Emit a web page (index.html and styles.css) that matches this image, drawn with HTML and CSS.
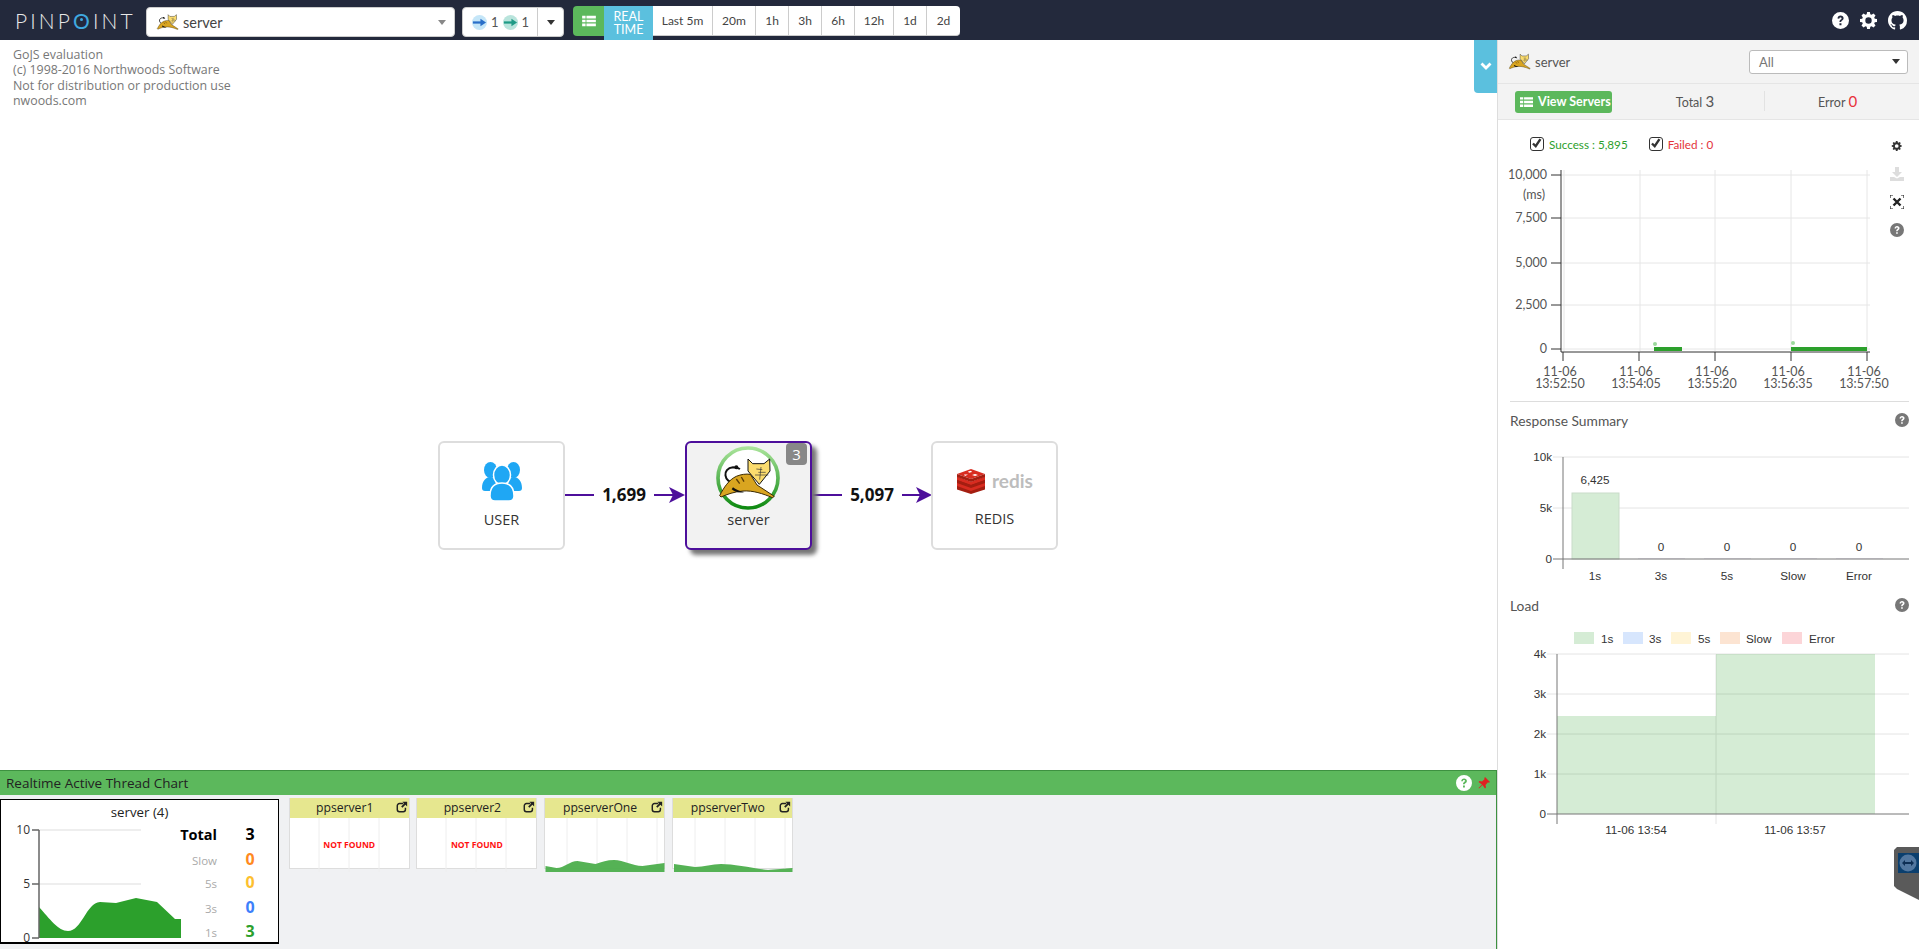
FILE: index.html
```html
<!DOCTYPE html>
<html lang="en">
<head>
<meta charset="utf-8">
<title>Pinpoint</title>
<link rel="stylesheet" href="styles.css">
</head>
<body>
<svg class="sprite" aria-hidden="true">
  <defs>
    <g id="cat">
      <path d="M165 152C132 150 126 108 160 105c8 0 14 1 21 5" fill="none" stroke="#111" stroke-width="6"/>
      <circle cx="170" cy="105" r="6" fill="#111"/>
      <path d="M120 190c12-24 28-48 50-58 14-6 30-8 42-6l20 32 52 34-6 4c-28-12-58-22-88-20-26 2-48 10-66 18z" fill="#d9a520" stroke="#3a2a05" stroke-width="3"/>
      <path d="M160 165c8 6 18 12 34 14-14 4-30 0-38-8z" fill="#111"/>
      <path d="M205 80l14 14h34l17-14 1 36-32 40-34-40z" fill="#fbdc6e" stroke="#111" stroke-width="3"/>
      <path d="M230 110l18 2M236 120h22M226 128h40M244 104l-4 38" fill="none" stroke="#333" stroke-width="2"/>
      <path d="M170 140l10 14M185 134l8 14" stroke="#5a3c05" stroke-width="4"/>
    </g>
    <g id="q">
      <path fill-rule="evenodd" d="M8 0a8 8 0 1 0 0 16A8 8 0 0 0 8 0zM5.200 6.200c0-1.700 1.300-2.800 2.900-2.800s2.800 1.100 2.800 2.500c0 2.100-2.200 2-2.200 3.400H7c0-2.400 2-2.300 2-3.300 0-.5-.4-.9-1-.9-.7 0-1.100.5-1.100 1.200zM7 10.500h1.900v1.900H7z"/>
    </g>
    <g id="cog">
      <path d="M6.600 0h2.800l.4 2.200 1.300.6 1.900-1.300 2 2-1.300 1.900.6 1.300 2.200.4v2.800l-2.200.4-.6 1.300 1.300 1.900-2 2-1.900-1.300-1.300.6-.4 2.200H6.600l-.4-2.200-1.300-.6L3 15.500l-2-2 1.300-1.900-.6-1.300L-.5 9.900V7.100l2.200-.4.6-1.300L1 3.500l2-2 1.900 1.300 1.300-.6zM8 5.300a3.200 3.200 0 1 0 0 6.400 3.200 3.200 0 0 0 0-6.400z" fill-rule="evenodd"/>
    </g>
    <g id="thlist">
      <path d="M0 1h4v3H0zM5 1h11v3H5zM0 5.500h4v3H0zM5 5.500h11v3H5zM0 10h4v3H0zM5 10h11v3H5z"/>
    </g>
    <g id="ext">
      <path d="M8.500 3H4a2.500 2.500 0 0 0-2.500 2.500V10A2.500 2.500 0 0 0 4 12.500h4.500A2.500 2.500 0 0 0 11 10V8" fill="none" stroke="#222" stroke-width="1.700"/>
      <path d="M7.500 1H13v5.500l-2-2L7.500 8 6 6.500 9.500 3z" fill="#222"/>
    </g>
  </defs>
</svg>

<div class="app">
  <header class="topbar">
    <div class="logo">PINP<span class="logo-o">O</span>INT</div>
    <div class="appsel">
      <svg class="cat-sm" viewBox="110 75 180 125"><use href="#cat"/></svg>
      <span class="appsel-name">server</span>
      <span class="caret caret-grey"></span>
    </div>
    <div class="depth">
      <div class="depth-main">
        <svg class="depth-ico" viewBox="0 0 16 16"><circle cx="8" cy="8" r="8" fill="#c5e6f8"/><path d="M1 8h9" stroke="#2a6fc9" stroke-width="2.400"/><path d="M9 4l6 4-6 4z" fill="#2a6fc9"/></svg>
        <span>1</span>
        <svg class="depth-ico" viewBox="0 0 16 16"><circle cx="8" cy="8" r="8" fill="#b9e4dc"/><path d="M1 8h9" stroke="#1f9a86" stroke-width="2.400"/><path d="M9 4l6 4-6 4z" fill="#1f9a86"/></svg>
        <span>1</span>
      </div>
      <div class="depth-drop"><span class="caret caret-dark"></span></div>
    </div>
    <div class="period">
      <div class="period-list"><svg class="ico-thlist" viewBox="0 0 16 14"><use href="#thlist"/></svg></div>
      <div class="period-real">REAL<br>TIME</div>
      <div class="period-btns">
        <span class="pb pb-5m">Last 5m</span><span class="pb pb-20">20m</span><span class="pb pb-s">1h</span><span class="pb pb-s">3h</span><span class="pb pb-s">6h</span><span class="pb pb-12">12h</span><span class="pb pb-s">1d</span><span class="pb pb-s">2d</span>
      </div>
    </div>
    <div class="top-icons">
      <svg class="ti" viewBox="0 0 16 16"><use href="#q"/></svg>
      <svg class="ti" viewBox="-0.500 0 17 17"><use href="#cog"/></svg>
      <svg class="ti ti-gh" viewBox="0 0 16 16"><path d="M8 0C3.580 0 0 3.580 0 8c0 3.540 2.290 6.530 5.470 7.590.4.070.55-.17.55-.38 0-.19-.01-.82-.01-1.490-2.010.37-2.530-.49-2.690-.94-.09-.23-.48-.94-.82-1.130-.28-.15-.68-.52-.01-.53.63-.01 1.080.58 1.230.82.72 1.210 1.870.87 2.330.66.07-.52.28-.87.51-1.070-1.780-.2-3.640-.89-3.640-3.950 0-.87.31-1.590.82-2.150-.08-.2-.36-1.020.08-2.120 0 0 .67-.21 2.200.82.64-.18 1.320-.27 2-.27.68 0 1.360.09 2 .27 1.530-1.040 2.200-.82 2.200-.82.44 1.100.16 1.920.08 2.120.51.56.82 1.270.82 2.150 0 3.070-1.870 3.750-3.650 3.950.29.25.54.73.54 1.480 0 1.070-.01 1.930-.01 2.200 0 .21.15.46.55.38A8.013 8.013 0 0016 8c0-4.420-3.580-8-8-8z"/></svg>
    </div>
  </header>

  <div class="main">
    <div class="left">
      <div class="canvas">
        <div class="watermark">GoJS evaluation<br>(c) 1998-2016 Northwoods Software<br>Not for distribution or production use<br>nwoods.com</div>

        <svg class="edges" viewBox="0 0 1497 730">
          <g class="edge">
            <path d="M564 455h30M654 455h24"/>
            <path class="arrow" d="M669 447l16 8-16 8 4-8z"/>
            <path d="M811 455h31M902 455h23"/>
            <path class="arrow" d="M916 447l16 8-16 8 4-8z"/>
          </g>
        </svg>
        <div class="elabel elabel-a">1,699</div>
        <div class="elabel elabel-b">5,097</div>

        <div class="node node-user">
          <svg class="n-users" viewBox="0 0 40 40">
            <g fill="#1fa7f4">
              <ellipse cx="8.500" cy="9" rx="6.500" ry="8"/><ellipse cx="31.500" cy="9" rx="6.500" ry="8"/>
              <path d="M0 27c0-7 4-11 8-11s6 3 6 8v6H3c-2 0-3-1-3-3zM40 27c0-7-4-11-8-11s-6 3-6 8v6h11c2 0 3-1 3-3z"/>
            </g>
            <ellipse cx="20" cy="14" rx="8.500" ry="10" fill="#1fa7f4" stroke="#fff" stroke-width="1.500"/>
            <path d="M8 35c0-9 5-13 12-13s12 4 12 13c0 3-2 5-5 5H13c-3 0-5-2-5-5z" fill="#1fa7f4" stroke="#fff" stroke-width="1.500"/>
          </svg>
          <div class="n-label">USER</div>
        </div>

        <div class="node node-server">
          <span class="badge">3</span>
          <svg class="n-cat" viewBox="105 38 200 198">
            <defs><linearGradient id="ring" x1="0" y1="0" x2="0" y2="1"><stop offset="0" stop-color="#a9e39a"/><stop offset="1" stop-color="#0f8a12"/></linearGradient></defs>
            <circle cx="205" cy="137" r="90" fill="#fff" stroke="url(#ring)" stroke-width="11"/>
            <use href="#cat"/>
          </svg>
          <div class="n-label n-label-server">server</div>
        </div>

        <div class="node node-redis">
          <div class="redis-logo">
            <svg class="redis-ico" viewBox="0 0 30 26">
              <path d="M15 14L1 8.500v13L15 26l14-4.500v-13z" fill="#a41e11"/>
              <path d="M15 1L1 6l14 5 14-5z" fill="#d82c20"/>
              <path d="M15 11L1 6v3l14 5 14-5V6z" fill="#a41e11"/>
              <path d="M15 14L1 9v3l14 5 14-5V9z" fill="#d82c20"/>
              <path d="M15 17L1 12v3l14 5 14-5v-3z" fill="#a41e11"/>
              <path d="M15 20L1 15v3l14 5 14-5v-3z" fill="#d82c20"/>
              <path d="M12 3.500l3-.7 1 1.200-3 .7zM19 6l3 1-3 1-3-1zM8 6.500h4l-3 1.500z" fill="#fff"/>
            </svg>
            <span class="redis-txt">redis</span>
          </div>
          <div class="n-label">REDIS</div>
        </div>

        <div class="collapse-tab"><svg class="chev" viewBox="0 0 12 9"><path d="M1.500 1.500L6 6l4.500-4.500" fill="none" stroke="#fff" stroke-width="2.800"/></svg></div>
      </div>

      <section class="rt">
        <div class="rt-head">
          <span>Realtime Active Thread Chart</span>
          <span class="rt-tools">
            <svg class="rt-q" viewBox="0 0 16 16"><use href="#q"/></svg>
            <svg class="rt-pin" viewBox="0 0 12 12"><path d="M7 0l5 5-1.200.8-.8-.5L7.500 8 8 10.500 7 11.500 4.500 8 1 11.500l-.5-.5L4 7.500.5 5l1-1L4 4.500l2.700-2.500-.5-.8z" fill="#e02020"/></svg>
          </span>
        </div>
        <div class="rt-body">
          <div class="tcard">
            <div class="tcard-title">server (4)</div>
            <svg class="tcard-chart" viewBox="0 0 279 125">
              <g class="t-grid"><path d="M39 11h102M39 65h102"/></g>
              <path d="M39 88C50 100 58 112 68 112 82 112 86 84 100 83L116 84 136 79 157 83 175 100 181 100V119H39z" fill="#2ca02c"/>
              <path class="t-axis" d="M39 11v108M32 11h7M32 65h7M32 119h7"/>
              <text class="t-y" x="30" y="15">10</text><text class="t-y" x="30" y="69">5</text><text class="t-y" x="30" y="123">0</text>
              <text class="t-total" x="217" y="21">Total</text><text class="t-n t-black" x="250" y="21">3</text>
              <text class="t-l" x="217" y="46">Slow</text><text class="t-n t-or" x="250" y="46">0</text>
              <text class="t-l" x="217" y="69">5s</text><text class="t-n t-ye" x="250" y="69">0</text>
              <text class="t-l" x="217" y="94">3s</text><text class="t-n t-bl" x="250" y="94">0</text>
              <text class="t-l" x="217" y="118">1s</text><text class="t-n t-gr" x="250" y="118">3</text>
            </svg>
          </div>
          <div class="scard">
            <div class="scard-h">ppserver1<svg class="ext" viewBox="0 0 14 14"><use href="#ext"/></svg></div>
            <div class="scard-b"><svg class="s-chart" viewBox="0 0 121 54"><path class="s-grid" d="M30 0v54M60 0v54M90 0v54"/></svg><span class="nf">NOT FOUND</span></div>
          </div>
          <div class="scard">
            <div class="scard-h">ppserver2<svg class="ext" viewBox="0 0 14 14"><use href="#ext"/></svg></div>
            <div class="scard-b"><svg class="s-chart" viewBox="0 0 121 54"><path class="s-grid" d="M30 0v54M60 0v54M90 0v54"/></svg><span class="nf">NOT FOUND</span></div>
          </div>
          <div class="scard">
            <div class="scard-h">ppserverOne<svg class="ext" viewBox="0 0 14 14"><use href="#ext"/></svg></div>
            <div class="scard-b"><svg class="s-chart" viewBox="0 0 121 54"><path class="s-grid" d="M23 0v54M53 0v54M83 0v54M113 0v54"/><path class="s-area" d="M1.500 48L12.500 50C20 50 26 43 33.500 43L51.500 46C58 44 63 42 70 42C80 42 88 48 98.500 48L120.500 45V54H1.500z"/></svg></div>
          </div>
          <div class="scard">
            <div class="scard-h">ppserverTwo<svg class="ext" viewBox="0 0 14 14"><use href="#ext"/></svg></div>
            <div class="scard-b"><svg class="s-chart" viewBox="0 0 121 54"><path class="s-grid" d="M23 0v54M53 0v54M83 0v54M113 0v54"/><path class="s-area" d="M2 46L23 49C32 49 40 46 49 46C62 46 80 50 96 52L120.500 50V54H2z"/></svg></div>
          </div>
        </div>
      </section>
    </div>

    <aside class="panel">
      <div class="p-head">
        <svg class="cat-sm cat-panel" viewBox="110 75 180 125"><use href="#cat"/></svg>
        <span class="p-name">server</span>
        <div class="p-select">All<span class="caret caret-dark caret-sm"></span></div>
      </div>
      <div class="p-stats">
        <div class="vs-btn"><svg class="vs-ico" viewBox="0 0 16 14"><use href="#thlist"/></svg>View Servers</div>
        <div class="stat">Total <b class="stat-n">3</b></div>
        <div class="stat stat-err">Error <b class="stat-n stat-red">0</b></div>
      </div>

      <section class="sec sec-scatter">
        <div class="checks">
          <span class="cb"><svg viewBox="0 0 14 14"><path d="M2.500 7l3.500 3.500 6-9" fill="none" stroke="#333" stroke-width="3"/></svg></span>
          <span class="ck-s">Success : 5,895</span>
          <span class="cb cb-2"><svg viewBox="0 0 14 14"><path d="M2.500 7l3.500 3.500 6-9" fill="none" stroke="#333" stroke-width="3"/></svg></span>
          <span class="ck-f">Failed : 0</span>
        </div>
        <div class="tools">
          <svg class="tool" viewBox="-3.500 -3.500 24 24"><use href="#cog"/></svg>
          <svg class="tool tool-off" viewBox="0 0 14 14"><path d="M5 0h4v5h3L7 10 2 5h3zM0 10h4l3 1.500 3-1.500h4v4H0z"/></svg>
          <svg class="tool" viewBox="0 0 14 14"><path d="M0 3V0h3M11 0h3v3M14 11v3h-3M3 14H0v-3" fill="none" stroke="#222" stroke-width="1.200"/><path d="M3.500 3.500l7 7M10.500 3.500l-7 7" stroke="#222" stroke-width="2.400"/></svg>
          <svg class="tool tool-q" viewBox="0 0 16 16"><use href="#q"/></svg>
        </div>
        <svg class="ch ch-scatter" viewBox="0 0 399 246">
          <path class="g" d="M51 21h309M51 64h309M51 109h309M51 151h309M51 195h309M54 16v181M130 16v181M205 16v181M281 16v181M357 16v181"/>
          <path class="ax" d="M51 16v182h309M41 21h10M41 64h10M41 109h10M41 151h10M41 195h10M53 198v9M129 198v9M205 198v9M281 198v9M357 198v9"/>
          <g class="yl"><text x="37" y="25">10,000</text><text x="37" y="68">7,500</text><text x="37" y="113">5,000</text><text x="37" y="155">2,500</text><text x="37" y="199">0</text></g>
          <text class="sl sl-m" x="24" y="45">(ms)</text>
          <g class="sl">
            <text x="50" y="222">11-06</text><text x="50" y="234">13:52:50</text>
            <text x="126" y="222">11-06</text><text x="126" y="234">13:54:05</text>
            <text x="202" y="222">11-06</text><text x="202" y="234">13:55:20</text>
            <text x="278" y="222">11-06</text><text x="278" y="234">13:56:35</text>
            <text x="354" y="222">11-06</text><text x="354" y="234">13:57:50</text>
          </g>
          <circle class="dot" cx="145" cy="190" r="2"/><circle class="dot" cx="283" cy="189" r="2"/>
          <path class="pts" d="M144 193h28v4h-28zM281 193h76v4h-76z"/>
        </svg>
      </section>

      <section class="sec">
        <div class="sec-title sec-title-a">Response Summary<svg class="help" viewBox="0 0 16 16"><use href="#q"/></svg></div>
        <svg class="ch ch-bar" viewBox="0 0 399 152">
          <path class="g2" d="M43 19h356M43 70h356"/>
          <rect class="bar" x="62" y="55" width="47" height="66"/>
          <path class="zero" d="M128 120.500h47"/><path class="zero" d="M194 120.500h47"/><path class="zero" d="M260 120.500h47"/><path class="zero" d="M326 120.500h47"/>
          <path class="ax2" d="M43 121h356M53 19v112"/>
          <g class="al al-e"><text x="42" y="23">10k</text><text x="42" y="74">5k</text><text x="42" y="125">0</text></g>
          <g class="al al-m">
            <text x="85" y="46">6,425</text><text x="151" y="113">0</text><text x="217" y="113">0</text><text x="283" y="113">0</text><text x="349" y="113">0</text>
            <text x="85" y="142">1s</text><text x="151" y="142">3s</text><text x="217" y="142">5s</text><text x="283" y="142">Slow</text><text x="349" y="142">Error</text>
          </g>
        </svg>
      </section>

      <section class="sec">
        <div class="sec-title sec-title-b">Load<svg class="help" viewBox="0 0 16 16"><use href="#q"/></svg></div>
        <svg class="ch ch-load" viewBox="0 0 399 225">
          <rect class="sw1" x="64" y="12" width="20" height="12"/><rect class="sw2" x="113" y="12" width="20" height="12"/><rect class="sw3" x="161" y="12" width="20" height="12"/><rect class="sw4" x="210" y="12" width="20" height="12"/><rect class="sw5" x="272" y="12" width="20" height="12"/>
          <g class="al"><text x="91" y="23">1s</text><text x="139" y="23">3s</text><text x="188" y="23">5s</text><text x="236" y="23">Slow</text><text x="299" y="23">Error</text></g>
          <path class="g2" d="M37 34h362M37 74h362M37 114h362M37 154h362M206 34v170"/>
          <path class="sw1 sw-a" d="M47 96h159V34h159v160H47z"/>
          <path class="ax2" d="M37 194h362M47 34v170"/>
          <g class="al al-e"><text x="36" y="38">4k</text><text x="36" y="78">3k</text><text x="36" y="118">2k</text><text x="36" y="158">1k</text><text x="36" y="198">0</text></g>
          <g class="al al-m"><text x="126" y="214">11-06 13:54</text><text x="285" y="214">11-06 13:57</text></g>
        </svg>
      </section>

      <svg class="tv" viewBox="0 0 25 53">
        <path d="M3 0h22v53L3 42l-3-3V3z" fill="#5a5a5a"/>
        <rect x="4" y="6" width="21" height="20" fill="#0b3f6e"/>
        <circle cx="14" cy="16" r="8.500" fill="#5277a0"/>
        <path d="M8 16l3-3v2h6v-2l3 3-3 3v-2h-6v2z" fill="#0e2f55"/>
      </svg>
    </aside>
  </div>
</div>
</body>
</html>
```
FILE: styles.css
```css
* { box-sizing: border-box; }
html, body { margin: 0; height: 100%; overflow: hidden; }
body { font-family: Lato, "Noto Sans", sans-serif; color: #333; background: #fff; }
.sprite { position: absolute; width: 0; height: 0; }

.app { display: flex; flex-direction: column; height: 949px; }

/* top bar */
.topbar { display: flex; align-items: flex-start; height: 40px; flex: none; background: #23293c; }
.logo { margin: 10px 15px 0 15px; width: 116px; font-size: 21px; line-height: 22px; font-weight: 300; letter-spacing: 3.100px; color: #e8e8e8; white-space: nowrap; }
.logo-o { position: relative; color: #3fa9e0; font-weight: 400; }
.logo-o::after { content: ""; position: absolute; left: 7px; top: 10px; width: 3px; height: 3px; border-radius: 50%; background: #3fa9e0; }
.appsel { display: flex; align-items: center; width: 309px; height: 30px; margin-top: 7px; padding-left: 9px; background: #fff; border-radius: 4px; border: 1px solid #ccc; }
.cat-sm { width: 23px; height: 20px; }
.appsel-name { margin-left: 4px; font-size: 14.500px; color: #444; }
.caret { display: inline-block; width: 0; height: 0; border-left: 4px solid transparent; border-right: 4px solid transparent; }
.caret-grey { margin-left: auto; margin-right: 8px; border-top: 5px solid #888; }
.caret-dark { border-top: 5px solid #333; }
.caret-sm { margin-left: auto; margin-right: 7px; }
.depth { display: flex; width: 102px; height: 30px; margin: 7px 0 0 7px; background: #fff; border-radius: 4px; border: 1px solid #ccc; }
.depth-main { display: flex; align-items: center; gap: 4px; width: 75px; padding-left: 9px; font-size: 13px; color: #555; border-right: 1px solid #ccc; }
.depth-ico { width: 15px; height: 15px; }
.depth-drop { display: flex; flex: 1; align-items: center; justify-content: center; }
.period { display: flex; align-items: flex-start; margin-left: 9px; }
.period-list { display: flex; align-items: center; justify-content: center; width: 31px; height: 30px; margin-top: 6px; background: #5cb85c; border-radius: 4px 0 0 4px; }
.ico-thlist { width: 14px; height: 12px; fill: #fff; }
.period-real { width: 49px; height: 34px; margin-top: 6px; padding-top: 4px; background: #5bc0de; color: #fff; font-size: 12.500px; line-height: 13px; text-align: center; }
.period-btns { display: flex; height: 30px; margin-top: 6px; background: #fff; border-radius: 0 4px 4px 0; border-bottom: 1px solid #ccc; }
.pb { display: flex; align-items: center; justify-content: center; font-size: 12px; color: #444; border-right: 1px solid #ccc; }
.pb:last-child { border-right: 0; }
.pb-5m { width: 60px; }
.pb-20 { width: 43px; }
.pb-s { width: 33px; }
.pb-12 { width: 39px; }
.top-icons { display: flex; align-items: center; gap: 11px; margin: 11px 12px 0 auto; }
.ti { width: 17px; height: 17px; fill: #fff; }
.ti-gh { width: 19px; height: 19px; }

/* main layout */
.main { display: flex; flex: 1; min-height: 0; }
.left { display: flex; flex-direction: column; width: 1497px; flex: none; }
.canvas { position: relative; flex: 1; }
.watermark { padding: 7px 0 0 13px; font: 12.400px/15.300px "Open Sans", sans-serif; color: #777; }
.edges { position: absolute; left: 0; top: 0; width: 1497px; height: 730px; }
.edge path { fill: none; stroke: #4d0f9b; stroke-width: 2; }
.edge .arrow { fill: #4d0f9b; stroke: none; }
.elabel { position: absolute; top: 443px; width: 60px; font: 700 17px/24px "Open Sans", sans-serif; color: #111; text-align: center; }
.elabel-a { left: 594px; }
.elabel-b { left: 842px; }
.node { position: absolute; top: 401px; width: 127px; height: 109px; border: 2px solid #ddd; border-radius: 6px; background: #fff; display: flex; flex-direction: column; align-items: center; }
.node-user { left: 438px; }
.node-server { left: 685px; width: 127px; border-color: #4d0f9b; background: #f2f2f2; box-shadow: 5px 5px 4px #777; }
.node-redis { left: 931px; }
.n-label { margin-top: 9px; font: 14.500px/20px "Open Sans", sans-serif; color: #333; }
.n-label-server { margin-top: -1px; }
.n-users { width: 40px; height: 40px; margin-top: 18px; }
.n-cat { width: 68px; height: 66px; margin-top: 2px; margin-left: -2px; }
.badge { position: absolute; right: 3px; top: 0; width: 21px; height: 22px; border-radius: 4px; background: #888; color: #fff; font: 15px/22px "Open Sans", sans-serif; text-align: center; }
.redis-logo { display: flex; align-items: center; gap: 6px; margin-top: 24px; height: 27px; }
.redis-ico { width: 30px; height: 26px; }
.redis-txt { font: 700 19px/26px Lato, sans-serif; color: #bdbdbd; }
.node-redis .n-label { margin-top: 15px; }
.collapse-tab { position: absolute; right: 0; top: 0; display: flex; align-items: center; justify-content: center; width: 23px; height: 53px; background: #5bc0de; border-radius: 0 0 0 4px; }
.chev { width: 12px; height: 9px; }

/* realtime */
.rt { height: 179px; flex: none; display: flex; flex-direction: column; background: #f0f1f3; border-right: 1px solid #3d9140; }
.rt-head { display: flex; align-items: center; justify-content: space-between; height: 25px; padding: 0 6px; background: #5cb85c; border-top: 1px solid #3d9140; font: 13.500px "Open Sans", sans-serif; color: #222; }
.rt-tools { display: flex; align-items: center; gap: 6px; }
.rt-q { width: 16px; height: 16px; fill: #fff; }
.rt-pin { width: 12px; height: 12px; }
.rt-body { display: flex; align-items: flex-start; gap: 6.700px; padding-top: 3px; flex: 1; }
.tcard { width: 279px; height: 145px; margin-top: 1px; margin-right: 3px; background: #fff; border: 1px solid #000; border-width: 1px 1px 2px 1px; font-family: "Open Sans", sans-serif; }
.tcard-title { height: 19px; font-size: 13.300px; line-height: 24px; text-align: center; color: #222; }
.tcard-chart { display: block; width: 279px; height: 125px; margin-left: -1px; overflow: visible; }
.t-grid path { stroke: #eee; stroke-width: 2; fill: none; }
.t-axis { fill: none; stroke: #666; stroke-width: 1.500; }
.t-y { font-size: 12px; text-anchor: end; fill: #333; }
.t-total { font-size: 14.500px; font-weight: 700; text-anchor: end; fill: #000; }
.t-l { font-size: 11.500px; text-anchor: end; fill: #aaa; }
.t-n { font-size: 16px; font-weight: 700; text-anchor: middle; }
.t-black { fill: #000; }
.t-or { fill: #ff8a1f; }
.t-ye { fill: #fdc02f; }
.t-bl { fill: #3d80fb; }
.t-gr { fill: #2ca02c; }
.scard { width: 121px; height: 71px; background: #fff; border: 1px solid #ddd; border-top: 0; }
.scard-h { position: relative; height: 20px; padding-right: 9px; background: #e6e78f; font: 12.200px/20px "Open Sans", sans-serif; text-align: center; color: #222; }
.ext { position: absolute; right: 1px; top: 3px; width: 12px; height: 12px; }
.scard-b { position: relative; height: 50px; }
.s-chart { position: absolute; left: -1px; top: 0; width: 121px; height: 54px; overflow: visible; }
.s-grid { fill: none; stroke: #eee; stroke-width: 1; }
.s-area { fill: #4cae4c; opacity: .95; }
.nf { position: absolute; left: 0; right: 0; top: 20px; font: 700 8.500px/14px "Open Sans", sans-serif; color: #f11; text-align: center; }

/* side panel */
.panel { position: relative; width: 422px; flex: none; border-left: 1px solid #ddd; background: #fff; }
.p-head { display: flex; align-items: center; height: 44px; padding: 0 11px 0 10px; background: #f3f3f3; border-bottom: 1px solid #e5e5e5; }
.cat-panel { width: 23px; height: 19px; }
.p-name { margin-left: 4px; font-size: 13px; color: #555; }
.p-select { display: flex; align-items: center; width: 159px; height: 24px; margin-left: auto; padding-left: 9px; background: #fff; border: 1px solid #bbb; border-radius: 3px; font-size: 13px; color: #777; }
.p-stats { display: flex; align-items: center; height: 36px; padding-left: 17px; background: #f3f3f3; border-bottom: 1px solid #e5e5e5; }
.vs-btn { display: flex; align-items: center; gap: 5px; width: 97px; height: 22px; margin-right: 14px; padding-left: 5px; background: #5cb85c; border-radius: 3px; color: #fff; font-size: 12.500px; font-weight: 700; white-space: nowrap; }
.vs-ico { width: 13px; height: 12px; fill: #fff; }
.stat { width: 138px; height: 20px; margin-bottom: 2px; font-size: 12.500px; line-height: 20px; text-align: center; color: #555; }
.stat-err { width: 146px; border-left: 1px solid #e2e2e2; }
.stat-n { font-size: 15px; font-weight: 400; }
.stat-red { color: #e8313a; }
.sec { margin: 0 10px 0 12px; }
.sec-scatter { position: relative; height: 282px; border-bottom: 1px solid #ddd; }
.checks { display: flex; align-items: center; height: 34px; padding: 17px 0 3px 20px; font-size: 11.700px; }
.cb { display: flex; width: 14px; height: 14px; border: 1.500px solid #333; border-radius: 3px; margin-right: 5px; background: #fff; }
.cb svg { width: 11px; height: 11px; }
.cb-2 { margin-left: 21px; }
.ck-s { color: #2ca02c; }
.ck-f { color: #e3343a; }
.tools { position: absolute; right: 5px; top: 19px; display: flex; flex-direction: column; gap: 14px; }
.tool { display: block; width: 14px; height: 14px; fill: #333; }
.tool-off { fill: #ddd; }
.tool-q { fill: #777; }
.ch { display: block; width: 399px; overflow: visible; }
.ch-scatter { height: 246px; }
.ch-bar { height: 152px; }
.ch-load { height: 225px; }
.g { fill: none; stroke: #e6e6e6; stroke-width: 1; }
.ax { fill: none; stroke: #333; stroke-width: 1; }
.yl text { font-size: 12.500px; text-anchor: end; fill: #555; }
.sl text, .sl-m { font-size: 12.500px; text-anchor: middle; fill: #555; }
.dot { fill: #9bd89b; }
.pts { fill: #2ca02c; }
.sec-title { display: flex; align-items: center; justify-content: space-between; padding-right: 0; font-size: 13.800px; color: #555; }
.sec-title-a { height: 36px; }
.sec-title-b { height: 30px; }
.help { width: 14px; height: 14px; fill: #777; }
.g2 { fill: none; stroke: #e4e4e4; stroke-width: 1; }
.ax2 { fill: none; stroke: #777; stroke-width: 1; }
.bar { fill: #d5ecd5; stroke: #c9dcc9; stroke-width: 1; }
.zero { fill: none; stroke: #ece8f2; stroke-width: 1; }
.al text { font: 11.700px "Liberation Sans", Arial, sans-serif; fill: #333; }
.al-e text { text-anchor: end; }
.al-m text { text-anchor: middle; }
.sw1 { fill: #d5ecd5; }
.sw2 { fill: #d7e6fd; }
.sw3 { fill: #fff4d6; }
.sw4 { fill: #fce4d2; }
.sw5 { fill: #fcd5d8; }
.sw-a { fill: rgba(44, 160, 44, .2); }
.tv { position: absolute; right: 0; top: 807px; width: 25px; height: 53px; }
```
